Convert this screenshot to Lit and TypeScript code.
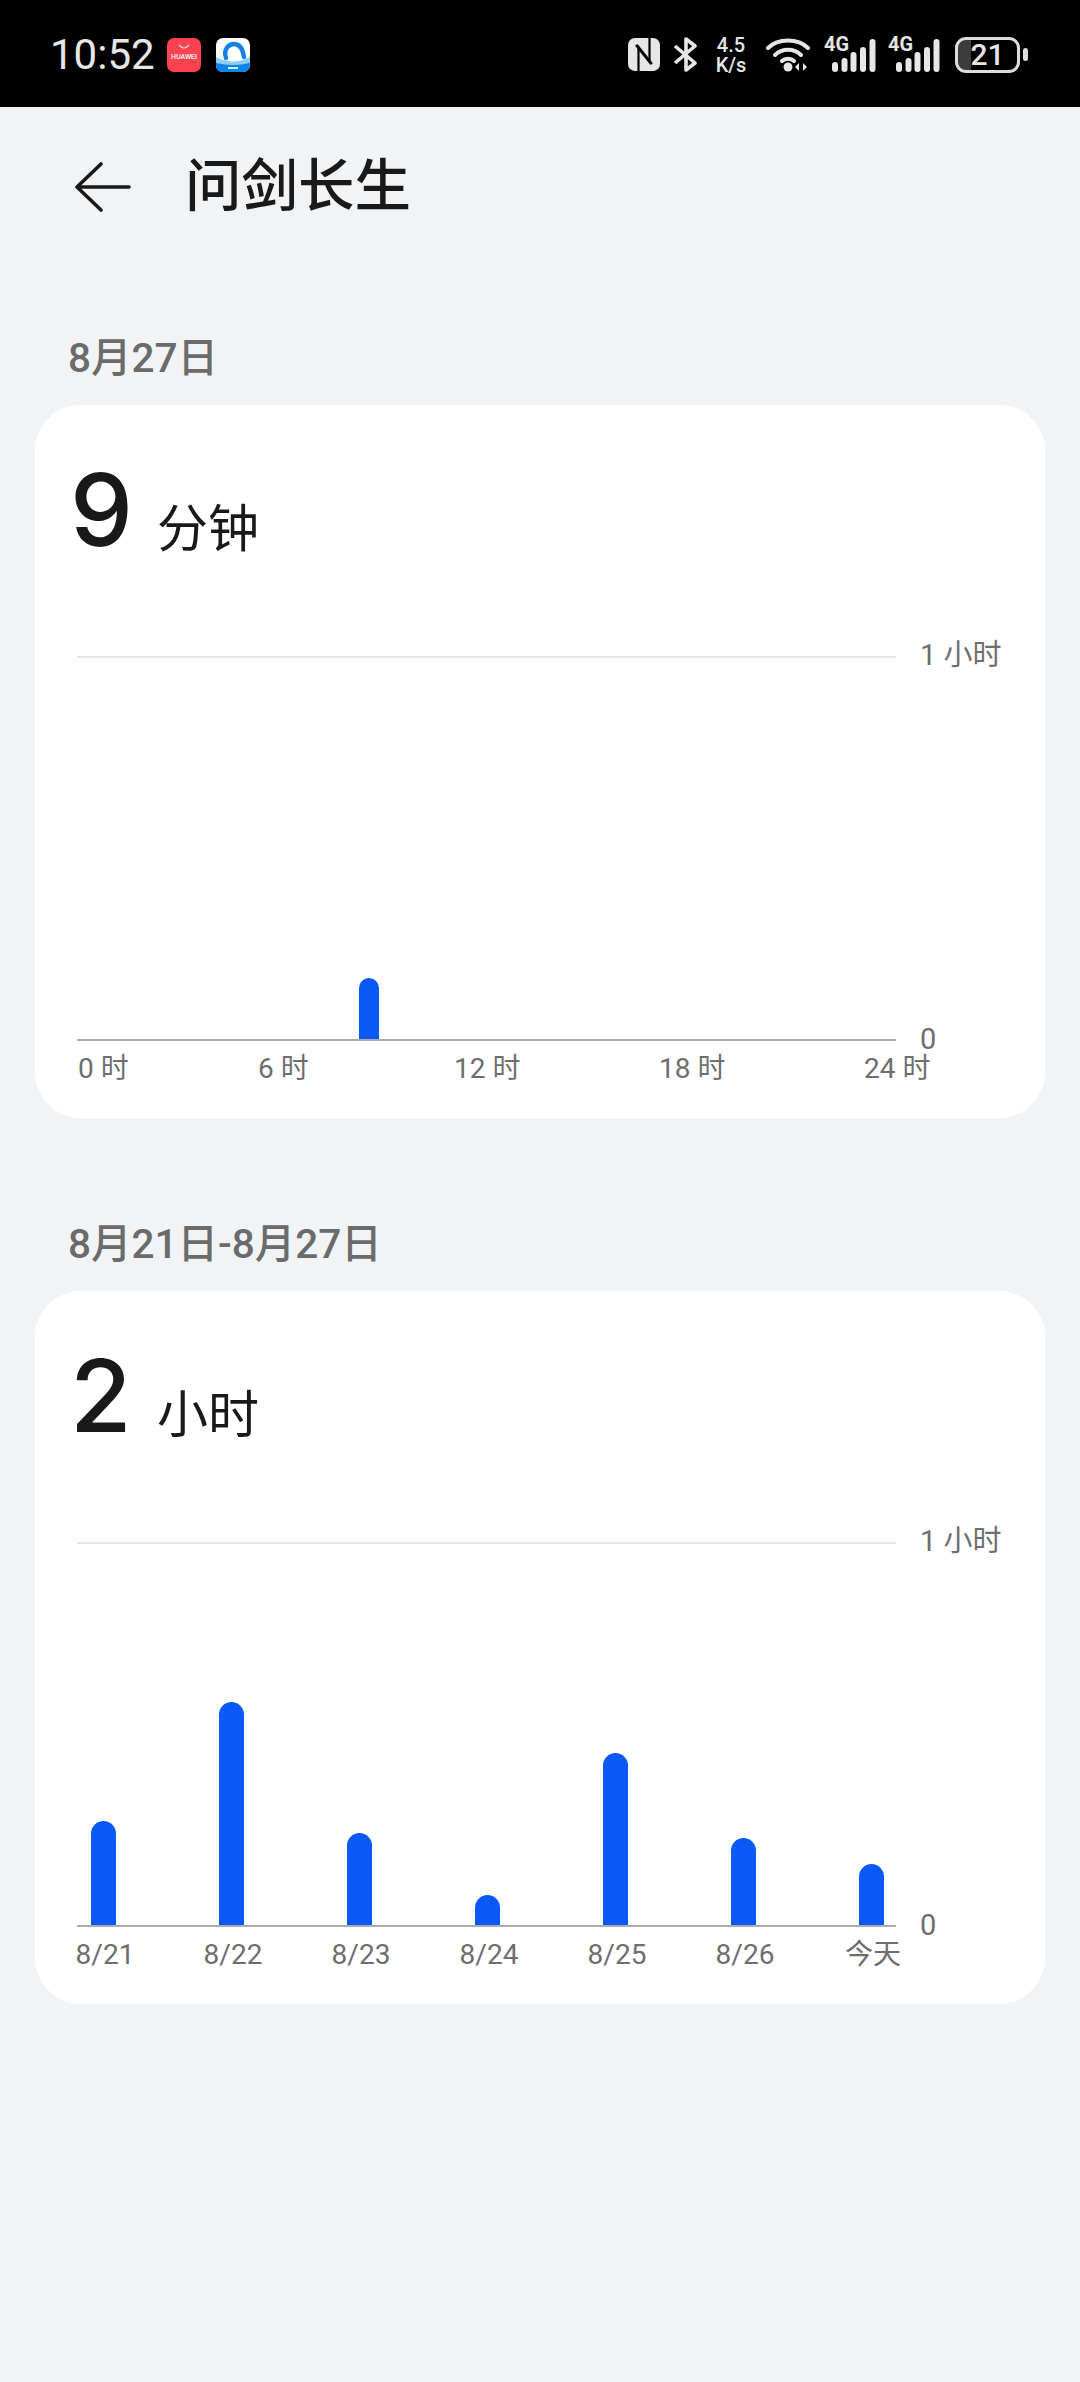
import { LitElement, html, css, svg } from "lit";
import { customElement, property } from "lit/decorators.js";

const SANS = css`Roboto, "Noto Sans CJK SC", sans-serif`;

interface Bar {
  height: number;
  offset?: number; // percent of the plot width, hourly chart only
}

@customElement("usage-card")
export class UsageCard extends LitElement {
  static styles = css`
    :host {
      display: block;
      height: 713px;
      padding: 0 0 0 42px;
      box-sizing: border-box;
      background: #fff;
      border-radius: 46px;
      font-family: ${SANS};
      overflow: hidden;
    }
    .summary {
      height: 251px;
      box-sizing: border-box;
      padding-top: 41px;
      display: flex;
      align-items: flex-start;
      color: #191919;
    }
    .value {
      font-family: Inter, sans-serif;
      font-size: 100px;
      font-weight: 450;
      line-height: 128px;
      width: 87px;
      margin-left: -7px;
    }
    .unit {
      margin-top: 54px;
      font-size: 51px;
      line-height: 60px;
    }
    .chart {
      display: grid;
      grid-template-columns: 819px 1fr;
      column-gap: 24px;
    }
    .plot {
      height: 385px;
      box-sizing: border-box;
      border-top: 2px solid #e5e6e8;
      border-bottom: 2px solid #a9abae;
      display: flex;
      align-items: flex-end;
    }
    .plot.week {
      justify-content: space-between;
      padding: 0 12px 0 14px;
    }
    .bar {
      width: 25px;
      border-radius: 13px 13px 0 0;
      background: #0a59f7;
    }
    .plot.day .bar {
      width: 20px;
      border-radius: 10px 10px 0 0;
    }
    .yaxis {
      display: flex;
      flex-direction: column;
      justify-content: space-between;
      margin: -15px 0 -12px;
      font-size: 29px;
      line-height: 28px;
      color: #6e6e6e;
    }
    .ticks {
      grid-column: 1 / 3;
      display: grid;
      margin-top: 14px;
      font-size: 28px;
      line-height: 28px;
      color: #6e6e6e;
    }
    .ticks.week {
      margin-left: -36px;
      grid-template-columns: repeat(7, 128px);
      text-align: center;
    }
    .ticks.day {
      margin-left: 1px;
      grid-template-columns: 180px 196px 205px 205px auto;
      white-space: nowrap;
    }
  `;

  @property({ type: String }) value = "";
  @property({ type: String }) unit = "";
  @property({ type: String }) mode = "week";
  @property({ type: Array }) bars: Bar[] = [];
  @property({ type: Array }) ticks: string[] = [];

  render() {
    return html`
      <div class="summary">
        <span class="value">${this.value}</span>
        <span class="unit">${this.unit}</span>
      </div>
      <div class="chart">
        <div class="plot ${this.mode}">
          ${this.bars.map(
            (b) => html`<div
              class="bar"
              style="height:${b.height}px;${b.offset ? `margin-left:${b.offset}%` : ""}"
            ></div>`
          )}
        </div>
        <div class="yaxis"><span>1 小时</span><span>0</span></div>
        <div class="ticks ${this.mode}">
          ${this.ticks.map((t) => html`<span>${t}</span>`)}
        </div>
      </div>
    `;
  }
}

// signal bars share a bottom edge, only the tops differ
const signalBars = [
  [0, 10],
  [9.5, 14],
  [18.5, 20],
  [28, 25],
  [37.5, 33],
];

@customElement("status-bar")
export class StatusBar extends LitElement {
  static styles = css`
    :host {
      display: flex;
      align-items: center;
      height: 107px;
      box-sizing: border-box;
      padding: 2px 52px 0 50px;
      background: #000;
      color: #e6e6e6;
      font-family: Roboto, sans-serif;
    }
    .time {
      font-size: 42px;
      line-height: 44px;
      width: 117px;
    }
    .app {
      width: 34px;
      height: 34px;
      margin-right: 15px;
      border-radius: 7px;
      overflow: hidden;
    }
    .right {
      margin-left: auto;
      display: flex;
      align-items: center;
    }
    svg {
      display: block;
    }
    .speed {
      width: 34px;
      margin: 0 18px 0 16px;
      font-size: 20px;
      font-weight: 500;
      line-height: 20px;
      text-align: center;
    }
    .speed span {
      display: block;
    }
    .signal {
      margin: 0 12px 5px 0;
    }
    .signal-text {
      font: 700 20px Roboto, sans-serif;
      fill: #e6e6e6;
    }
    .battery {
      width: 65px;
      height: 36px;
      box-sizing: border-box;
      margin: 0 3px;
      border: 3px solid #dcdcdc;
      border-radius: 11px;
      overflow: hidden;
      text-align: center;
      font-size: 30px;
      font-weight: 500;
      line-height: 30px;
      background: linear-gradient(90deg, #3c3c3c 13px, #000 13px);
    }
    .nub {
      width: 5px;
      height: 13px;
      border-radius: 3px;
      background: #dcdcdc;
    }
  `;

  private signal() {
    return html`<svg class="signal" width="52" height="42" viewBox="0 -5 52 42">
      <text class="signal-text" x="0" y="15" textLength="25" lengthAdjust="spacingAndGlyphs">4G</text>
      ${signalBars.map(
        ([x, h]) =>
          svg`<rect x=${x + 8} y=${36 - h} width="6" height=${h} rx="3" fill="#e6e6e6"></rect>`
      )}
    </svg>`;
  }

  render() {
    return html`
      <span class="time">10:52</span>
      <svg class="app" viewBox="0 0 34 34">
        <rect width="34" height="34" fill="#fb4250"></rect>
        <path d="M12 7q5 6 10 0" fill="none" stroke="#ffd9dc" stroke-width="1.2"></path>
        <text x="4" y="21" textLength="26" lengthAdjust="spacingAndGlyphs" font-size="6.6" font-weight="500" font-family="Roboto" fill="#fff">HUAWEI</text>
      </svg>
      <svg class="app" viewBox="0 0 34 34">
        <rect width="34" height="34" fill="#fdfeff"></rect>
        <path d="M0 24q17 3 34 0v10H0z" fill="#0d84e8"></path>
        <path d="M0 19q17 9 34 0v6q-17 4-34 0z" fill="#8ccdf8"></path>
        <path d="M10 20C7 11 13 6 18 6c6 0 9 6 10 13" fill="none" stroke="#1580e6" stroke-width="4.4" stroke-linecap="round"></path>
        <rect x="12" y="29" width="10" height="2" fill="#d7eeff"></rect>
      </svg>
      <div class="right">
        <svg width="32" height="33" viewBox="0 0 32 33">
          <rect width="32" height="33" rx="7" fill="#e6e6e6"></rect>
          <path d="M10.5 33V9L24 26" fill="none" stroke="#000" stroke-width="2.2"></path>
          <path d="M21.5 0v24L8 7" fill="none" stroke="#000" stroke-width="2.2"></path>
        </svg>
        <svg style="margin-left:13px" width="25" height="35" viewBox="0 0 25 35">
          <path d="M2 9l20 17-9 7V2l9 7L2 26" fill="none" stroke="#e6e6e6" stroke-width="3.6" stroke-linejoin="round"></path>
        </svg>
        <div class="speed"><span>4.5</span><span>K/s</span></div>
        <svg width="45" height="34" viewBox="0 0 45 34">
          <g fill="none" stroke="#e6e6e6" stroke-width="4" stroke-linecap="round">
            <path d="M2 10C12 0 32 0 42 10"></path>
            <path d="M9 17C16 10 28 10 35 17"></path>
            <path d="M16 23C19 20 25 20 28 23"></path>
          </g>
          <circle cx="22" cy="29" r="4.5" fill="#e6e6e6"></circle>
          <path d="M33 25v8l-4-4zM37 33v-8l4 4z" fill="#e6e6e6"></path>
        </svg>
        <span style="width:13px"></span>
        ${this.signal()}${this.signal()}
        <div class="battery">21</div>
        <div class="nub"></div>
      </div>
    `;
  }
}

@customElement("app-root")
export class AppRoot extends LitElement {
  static styles = css`
    :host {
      display: block;
      width: 1080px;
      height: 2382px;
      background: #f1f3f5;
      font-family: ${SANS};
      overflow: hidden;
    }
    .nav {
      height: 160px;
      display: flex;
      align-items: center;
      padding-left: 75px;
      color: #191919;
    }
    .back {
      display: block;
      margin-right: 54px;
    }
    h1 {
      margin: 0;
      font-size: 56.5px;
      font-weight: 500;
      line-height: 70px;
    }
    main {
      padding: 66px 35px 0;
    }
    section {
      margin-bottom: 101px;
    }
    h2 {
      margin: 0;
      padding: 0 0 22px 33px;
      font-size: 40.5px;
      font-weight: 500;
      line-height: 50px;
      color: #6b6b6b;
    }
  `;

  render() {
    return html`
      <status-bar></status-bar>
      <div class="nav">
        <svg class="back" width="56" height="50" viewBox="0 0 56 50">
          <path d="M26 2L2 25l24 23M2 25h52" fill="none" stroke="#191919" stroke-width="3.6" stroke-linecap="round" stroke-linejoin="round"></path>
        </svg>
        <h1>问剑长生</h1>
      </div>
      <main>
        <section>
          <h2>8月27日</h2>
          <usage-card
            value="9"
            unit="分钟"
            mode="day"
            .bars=${[{ height: 61, offset: 34.4 }]}
            .ticks=${["0 时", "6 时", "12 时", "18 时", "24 时"]}
          ></usage-card>
        </section>
        <section>
          <h2>8月21日-8月27日</h2>
          <usage-card
            value="2"
            unit="小时"
            mode="week"
            .bars=${[104, 223, 92, 30, 172, 87, 61].map((height) => ({ height }))}
            .ticks=${["8/21", "8/22", "8/23", "8/24", "8/25", "8/26", "今天"]}
          ></usage-card>
        </section>
      </main>
    `;
  }
}
